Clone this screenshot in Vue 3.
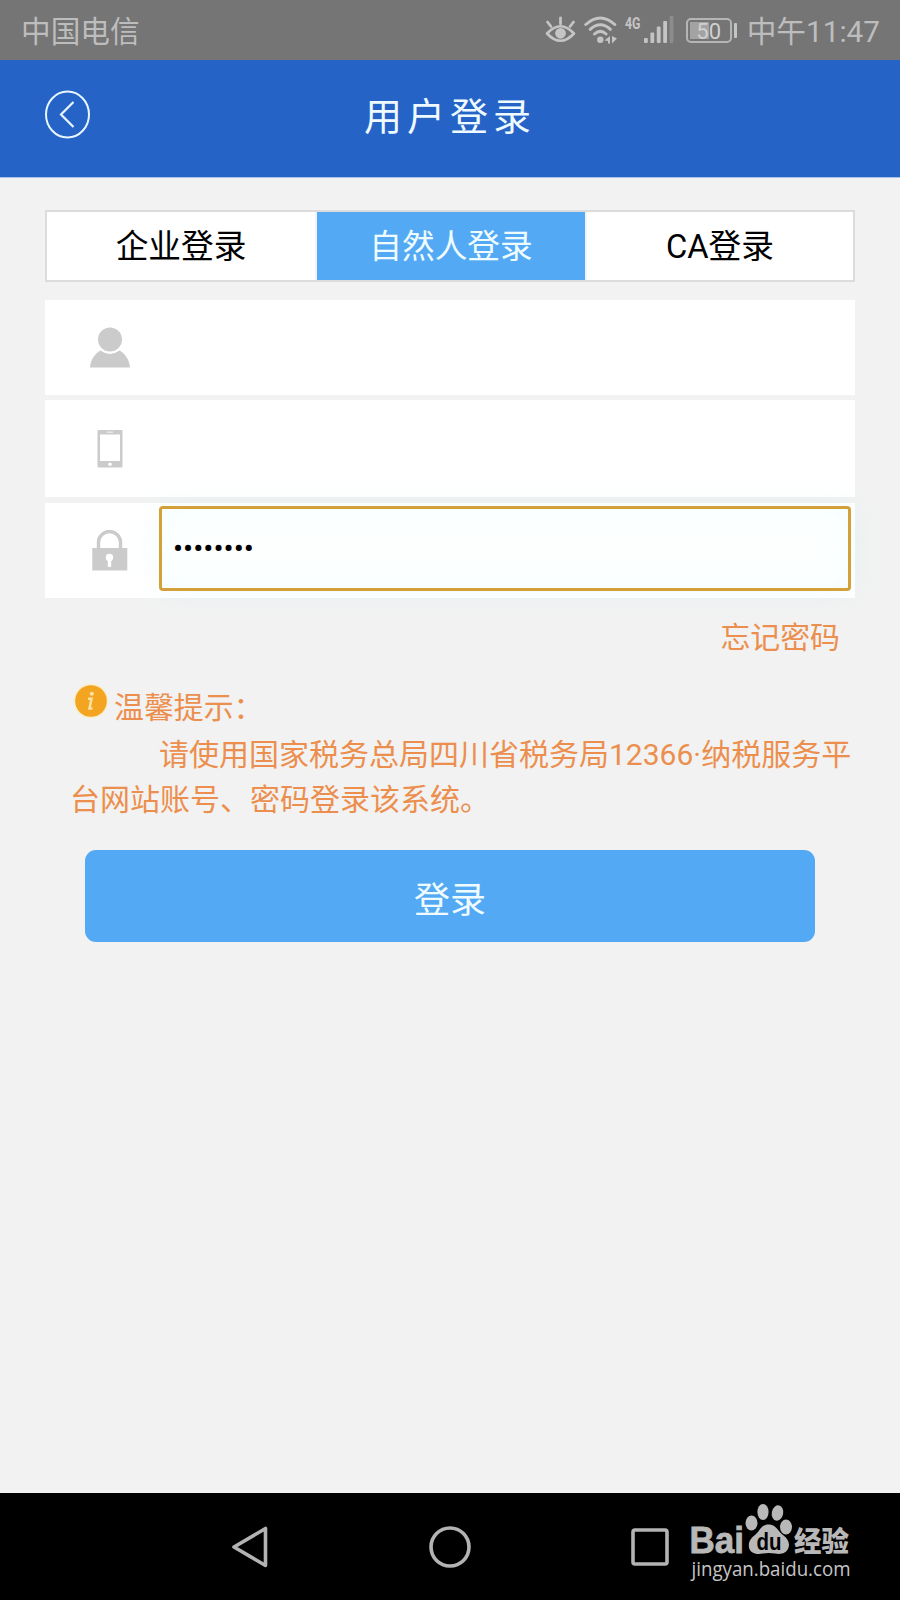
<script setup>
import { ref } from 'vue'

// Login types
const tabs = [
  { key: 'company', label: '企业登录' },
  { key: 'person', label: '自然人登录' },
  { key: 'ca', label: 'CA登录' }
]
const activeTab = ref('person')

// Form state
const username = ref('')
const phone = ref('')
const password = ref('12345678')
</script>

<template>
  <div class="screen">
    <div class="status-bar">
      <span class="carrier">中国电信</span>
      <div class="status-right">
        <svg class="icon-eye" width="31" height="28" viewBox="0 0 31 28">
          <path d="M2 17.5Q15.5 3 29 17.5Q15.5 32 2 17.5Z" fill="none" stroke="#c4c4c4" stroke-width="2.7" stroke-linejoin="round" />
          <circle cx="15.5" cy="17.3" r="5.4" fill="#c4c4c4" />
          <path d="M15.5 2v6M2.500 6l3.500 4.500M28.500 6l-3.500 4.500" stroke="#c4c4c4" stroke-width="2.8" stroke-linecap="round" />
        </svg>
        <svg class="icon-wifi" width="34" height="28" viewBox="0 0 34 28">
          <g fill="none" stroke="#c4c4c4" stroke-width="3" stroke-linecap="round">
            <path d="M1.800 8.500Q16.300-4.500 30.800 8.500" />
            <path d="M6.200 13.300Q16.300 4.300 26.400 13.300" />
            <path d="M10.500 18Q16.300 12.800 22.100 18" />
          </g>
          <circle cx="16.300" cy="23.800" r="3.200" fill="#c4c4c4" />
          <path d="M26 20v7.500h-2v-2.500l-3.500-.5zM28 20v7.500l5-5z" fill="#c4c4c4" />
        </svg>
        <svg class="net-type" width="16" height="14" viewBox="0 0 16 14">
          <text x="0" y="12.500" textLength="15.500" lengthAdjust="spacingAndGlyphs">4G</text>
        </svg>
        <svg class="icon-signal" width="30" height="28" viewBox="0 0 30 28">
          <g fill="#c4c4c4">
            <rect x="0" y="22" width="3.800" height="5" rx="1" />
            <rect x="6.400" y="16.500" width="3.800" height="10.500" rx="1" />
            <rect x="12.800" y="10.500" width="3.800" height="16.500" rx="1" />
            <rect x="19.200" y="5" width="3.800" height="22" rx="1" />
            <rect x="25.600" y="0" width="3.800" height="27" rx="1" opacity="0.3" />
          </g>
        </svg>
        <div class="battery">
          <span class="battery-body">50</span>
          <span class="battery-cap"></span>
        </div>
        <span class="time">中午11:47</span>
      </div>
    </div>

    <header class="header">
      <svg class="back" width="46" height="50" viewBox="0 0 46 50">
        <ellipse cx="22.500" cy="24.500" rx="21.500" ry="23" fill="none" stroke="#e8f6ff" stroke-width="2" />
        <path d="M28.500 12L16 24.500L28.500 37" fill="none" stroke="#e8f6ff" stroke-width="2.200" />
      </svg>
      <h1 class="title">用户登录</h1>
    </header>

    <main class="content">
      <div class="tabs">
        <button
          v-for="tab in tabs"
          :key="tab.key"
          class="tab"
          :class="{ active: tab.key === activeTab }"
          @click="activeTab = tab.key"
        >{{ tab.label }}</button>
      </div>

      <div class="row">
        <svg class="row-icon" width="42" height="42" viewBox="0 0 42 42">
          <circle cx="21" cy="12.500" r="12" fill="#cbcbcb" />
          <path d="M1 40.500C1.500 33 6 26.500 11.500 23.500Q21 30.500 30.500 23.500C36 26.500 40.500 33 41 40.500Z" fill="#cbcbcb" />
        </svg>
        <input v-model="username" class="field" type="text" />
      </div>

      <div class="row row-phone">
        <svg class="row-icon" width="42" height="42" viewBox="0 0 42 42">
          <path fill-rule="evenodd" d="M9.500 2h23q1 0 1 1v35.500q0 1-1 1h-23q-1 0-1-1V3q0-1 1-1zM11 6.500v26.500h20V6.500z" fill="#cbcbcb" />
          <rect x="18" y="3.600" width="6" height="1.200" fill="#eee" />
          <circle cx="21" cy="36.300" r="1.800" fill="#fff" />
        </svg>
        <input v-model="phone" class="field" type="text" />
      </div>

      <div class="row">
        <svg class="row-icon" width="42" height="42" viewBox="0 0 42 42">
          <path d="M9.500 20V12.500a11 11 0 0 1 22 0v7.500" fill="none" stroke="#cbcbcb" stroke-width="3.400" />
          <rect x="3.300" y="18" width="35" height="22.500" fill="#cbcbcb" />
          <circle cx="20.500" cy="27.500" r="3.700" fill="#fff" />
          <rect x="18.800" y="28.500" width="3.400" height="8.500" rx="1" fill="#fff" />
        </svg>
        <input v-model="password" class="field focused" type="password" />
      </div>

      <a class="forgot">忘记密码</a>

      <section class="tips">
        <div class="tips-head">
          <svg class="tips-icon" width="36" height="36" viewBox="0 0 36 36">
            <circle cx="18" cy="18" r="17.300" fill="#f8eecb" />
            <circle cx="18" cy="18" r="15.800" fill="#f3a521" />
            <circle cx="18.800" cy="10.800" r="2" fill="#fbe3a5" />
            <path d="M15 15.800h3.500l-2 9.700h3" fill="none" stroke="#fbe3a5" stroke-width="2.500" />
          </svg>
          <span>温馨提示：</span>
        </div>
        <p class="tips-text">请使用国家税务总局四川省税务局12366·纳税服务平台网站账号、密码登录该系统。</p>
      </section>

      <button class="submit">登录</button>
    </main>

    <nav class="nav-bar">
      <svg width="42" height="46" viewBox="0 0 42 46">
        <path d="M5 23L36.500 4.500V41.500Z" fill="none" stroke="#b3b3b3" stroke-width="3.600" stroke-linejoin="round" />
      </svg>
      <svg width="42" height="46" viewBox="0 0 42 46">
        <circle cx="21" cy="23" r="19" fill="none" stroke="#b3b3b3" stroke-width="3.600" />
      </svg>
      <svg width="42" height="46" viewBox="0 0 42 46">
        <rect x="4" y="6" width="34" height="34" rx="2" fill="none" stroke="#b3b3b3" stroke-width="3.600" />
      </svg>

      <!-- Watermark over the nav bar -->
      <svg class="watermark" width="170" height="86" viewBox="0 0 170 86">
        <g fill="#b8b8b8">
          <text class="wm-bai" x="0.500" y="53" textLength="54.500" lengthAdjust="spacingAndGlyphs">Bai</text>
          <ellipse cx="62.500" cy="23" rx="6" ry="7.500" />
          <ellipse cx="74" cy="12" rx="5.600" ry="8" />
          <ellipse cx="88.500" cy="13" rx="5.700" ry="7.700" transform="rotate(12 88.500 13)" />
          <ellipse cx="97" cy="27" rx="6" ry="7.500" />
          <path d="M79.500 24.500C87 24.500 89 31 94 35C99 39 101 43 99.500 47.500C97.500 54 91 54.500 86 53.500Q79.500 52.500 74 53.500C67 55 61 53 60 47.500C59 42 62 38 66 35C71 31 72 24.500 79.500 24.500Z" />
          <text class="wm-cn" x="105" y="51.500" textLength="55" lengthAdjust="spacingAndGlyphs">经验</text>
        </g>
        <text class="wm-du" x="67.500" y="49.500" textLength="25" lengthAdjust="spacingAndGlyphs">du</text>
        <text class="wm-url" x="2.500" y="75.500" textLength="159" lengthAdjust="spacingAndGlyphs">jingyan.baidu.com</text>
      </svg>
    </nav>
  </div>
</template>

<style>
body {
  margin: 0;
  background: #f2f2f2;
}
</style>

<style scoped>
.screen {
  display: flex;
  flex-direction: column;
  width: 900px;
  height: 1600px;
  background: #f2f2f2;
  font-family: Roboto, "Noto Sans CJK SC", sans-serif;
  overflow: hidden;
}

button,
input {
  margin: 0;
  border: none;
  font-family: inherit;
  box-sizing: border-box;
}

/* Status bar */
.status-bar {
  display: flex;
  justify-content: space-between;
  height: 60px;
  box-sizing: border-box;
  padding: 0 20px 0 21px;
  background: #757575;
  color: #bdbdbd;
  font-size: 29.7px;
  line-height: 63px;
}

.status-right {
  display: flex;
}

.icon-eye,
.icon-wifi,
.icon-signal {
  margin-top: 16px;
}

.icon-wifi {
  margin-left: 8px;
}

.net-type {
  margin: 16px 0 0 7px;
  fill: #c4c4c4;
  font-size: 17px;
  font-weight: 700;
}

.icon-signal {
  margin-left: 3px;
}

.battery {
  display: flex;
  align-items: center;
  height: 25px;
  margin: 18px 0 0 12px;
}

.battery-body {
  width: 46px;
  height: 25px;
  box-sizing: border-box;
  border: 2px solid #b5b5b5;
  border-radius: 5px;
  background: linear-gradient(90deg, #a3a3a3 50%, transparent 50%) 2px 2px / 38px 17px no-repeat;
  color: #d0d0d0;
  font-size: 22px;
  line-height: 23px;
  text-align: center;
}

.battery-cap {
  width: 3px;
  height: 15px;
  margin-left: 2px;
  border-radius: 1px;
  background: #c4c4c4;
}

.time {
  margin-left: 10px;
}

/* Header */
.header {
  display: flex;
  align-items: center;
  height: 118px;
  box-sizing: border-box;
  padding: 0 45px;
  background: #2563c7;
  border-bottom: 1px solid #a9c1e6;
}

.back {
  margin-bottom: 8px;
}

.title {
  flex: 1;
  margin: 0 46px 3px 0;
  color: #eefaff;
  font-size: 38px;
  font-weight: 400;
  line-height: 50px;
  letter-spacing: 5px;
  text-align: center;
}

/* Form */
.content {
  display: flex;
  flex: 1;
  flex-direction: column;
  padding: 32px 45px 0;
}

.tabs {
  display: grid;
  grid-template-columns: 268px 268px 1fr;
  gap: 2px;
  height: 72px;
  box-sizing: border-box;
  margin-bottom: 18px;
  border: 2px solid #dcdcdc;
  background: #eef4f8;
}

.tab {
  padding: 0 0 5px;
  background: #fff;
  color: #000;
  font-size: 32.7px;
}

.tab.active {
  background: #53a9f3;
  color: #eefcff;
}

.row {
  display: flex;
  align-items: center;
  height: 95px;
  box-sizing: border-box;
  margin-bottom: 5px;
  padding: 0 4px 0 44px;
  background: #fff;
}

.row-phone {
  height: 97px;
  margin-bottom: 6px;
}

.row-icon {
  flex: none;
  margin-right: 28px;
}

.field {
  flex: 1;
  height: 85px;
  padding: 0 14px 0 11px;
  background: transparent;
  color: #000;
  font-size: 30px;
  outline: none;
}

.field.focused {
  border: 3px solid #d3a03a;
  border-radius: 4px;
  background: #fdffff;
  box-shadow: 0 0 30px rgba(140, 225, 235, 0.12), inset 0 0 30px rgba(210, 252, 255, 0.2);
  margin-bottom: 4px;
}

.forgot {
  align-self: flex-end;
  margin: 11px 15px 0 0;
  color: #ec8f4e;
  font-size: 29.9px;
  line-height: 48px;
}

/* Tips */
.tips {
  margin: 21px 0 0 25px;
  color: #ec8f4e;
  font-size: 29.9px;
}

.tips-head {
  display: flex;
  height: 49px;
  padding-left: 3px;
  line-height: 50px;
}

.tips-icon {
  margin: 0 5px 0 0;
}

.tips-text {
  width: 785px;
  margin: 0;
  font-size: 30px;
  line-height: 45px;
  text-indent: 89px;
}

.submit {
  height: 92px;
  margin: 28px 40px 0;
  padding: 1px 0 0;
  border-radius: 11px;
  background: #53a9f3;
  color: #eefcff;
  font-size: 36px;
}

/* Navigation bar */
.nav-bar {
  position: relative;
  display: flex;
  justify-content: center;
  align-items: center;
  gap: 158px;
  height: 107px;
  background: #000;
}

.watermark {
  position: absolute;
  top: 7px;
  left: 689px;
}

.wm-bai {
  font-family: "Liberation Sans", sans-serif;
  font-size: 36px;
  font-weight: 700;
  stroke: #b8b8b8;
  stroke-width: 0.8px;
}

.wm-cn {
  font-family: "Noto Sans CJK SC", sans-serif;
  font-size: 28px;
  font-weight: 900;
}

.wm-du {
  fill: #000;
  font-family: "Liberation Sans", sans-serif;
  font-size: 23px;
  font-weight: 700;
}

.wm-url {
  fill: #c6c6c6;
  font-family: "Open Sans", "Noto Sans", sans-serif;
  font-size: 20px;
}
</style>
